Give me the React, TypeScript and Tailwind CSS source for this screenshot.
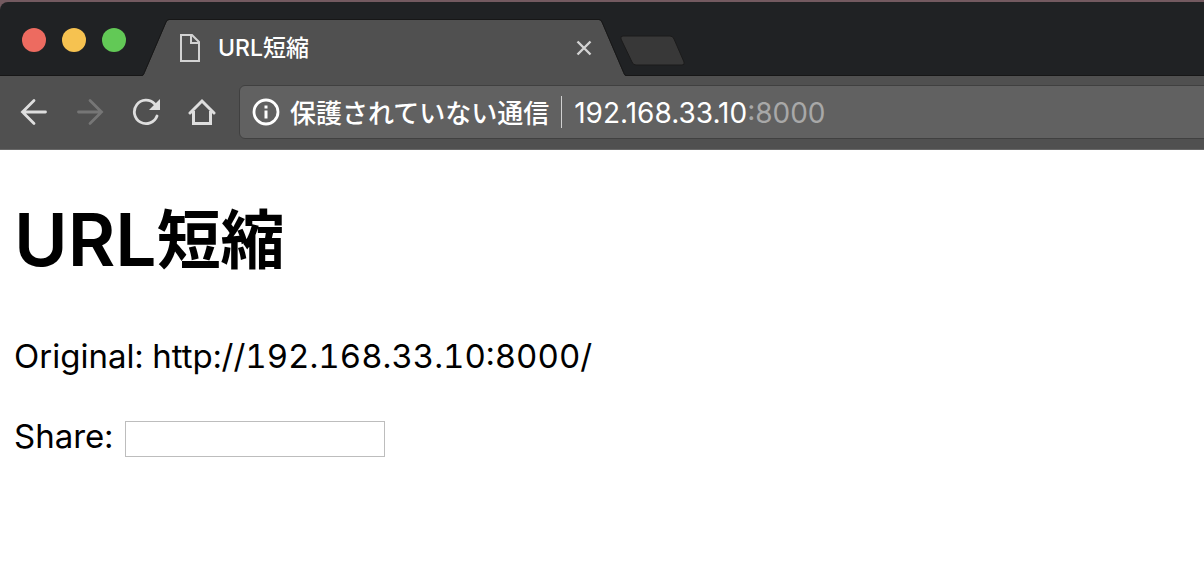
import React from "react";

function WindowControls() {
  return (
    <div className="flex gap-4 pt-[26px] pl-[22px]">
      <button type="button" aria-label="Close window" className="size-6 rounded-full bg-[#ed6b60]" />
      <button type="button" aria-label="Minimize window" className="size-6 rounded-full bg-[#f6c250]" />
      <button type="button" aria-label="Zoom window" className="size-6 rounded-full bg-[#62c956]" />
    </div>
  );
}

function TabStrip() {
  return (
    <div className="flex h-[74px] items-start rounded-tl-lg border-b border-[#171717] bg-[#202224]">
      <WindowControls />
      <div className="ml-4 flex w-[484px] shrink-0 self-end">
        <svg viewBox="0 0 27 57" className="-mb-px h-[57px] w-[27px] shrink-0" aria-hidden="true">
          <path d="M0 57 C2 56 2 55 3 53 L24 4 Q25 1 27 1 V57Z" fill="#505050" />
          <path d="M0 56.5 C2 56 2 54 3 52 L24 3 Q25 .5 27 .5" fill="none" stroke="#171717" />
        </svg>
        <div className="-mb-px flex h-[57px] min-w-0 flex-1 items-center border-t border-[#171717] bg-[#505050] pl-[10px]">
          <svg viewBox="0 0 22 30" className="h-[30px] w-[22px] shrink-0" fill="none" stroke="#d2d2d2" strokeWidth="2" aria-hidden="true">
            <path d="M2 2H13L20 9V28H2Z" />
            <path d="M12 2V10H20" />
          </svg>
          <span className="ml-[17px] flex-1 truncate font-['Inter','Noto_Sans_CJK_JP',sans-serif] text-[23px] leading-8 font-medium text-white">
            URL短縮
          </span>
          <button type="button" aria-label="Close tab" className="mr-[7px] flex size-4 items-center justify-center">
            <svg viewBox="0 0 16 16" className="size-4" stroke="#d2d2d2" strokeWidth="2.4">
              <path d="M1.5 1.5L14.5 14.5M14.5 1.5L1.5 14.5" />
            </svg>
          </button>
        </div>
        <svg viewBox="0 0 27 57" className="-mb-px h-[57px] w-[27px] shrink-0" aria-hidden="true">
          <path d="M27 57 C25 56 25 55 24 53 L3 4 Q2 1 0 1 V57Z" fill="#505050" />
          <path d="M27 56.5 C25 56 25 54 24 52 L3 3 Q2 .5 0 .5" fill="none" stroke="#171717" />
        </svg>
      </div>
      <button type="button" aria-label="New tab" className="-ml-[6px] mt-[33px]">
        <svg viewBox="0 0 66 32" className="h-8 w-[66px]">
          <path d="M3 1H50Q53 1 54 4L64 27Q65 30 62 30H16Q13 30 12 27L1 4Q0 1 3 1Z" fill="#383838" stroke="#1b1b1b" />
        </svg>
      </button>
    </div>
  );
}

function Toolbar() {
  return (
    <div className="flex h-[74px] items-start border-b border-[#686868] bg-[#505050] pt-[9px]">
      <div className="flex shrink-0 gap-7 pt-[13px] pr-[23px] pl-5">
        <button type="button" aria-label="Back">
          <svg viewBox="0 0 28 28" className="size-7" fill="none" stroke="#dedede" strokeWidth="2.8" strokeLinecap="round">
            <path d="M25.5 14H2.5M14 2.5L2.5 14L14 25.5" />
          </svg>
        </button>
        <button type="button" aria-label="Forward" disabled>
          <svg viewBox="0 0 28 28" className="size-7" fill="none" stroke="#767676" strokeWidth="2.8" strokeLinecap="round">
            <path d="M2.5 14H25.5M14 2.5L25.5 14L14 25.5" />
          </svg>
        </button>
        <button type="button" aria-label="Reload">
          <svg viewBox="0 0 28 28" className="size-7" fill="none">
            <path d="M22.5 5.8A11.7 11.7 0 1 0 25 18" stroke="#dedede" strokeWidth="2.8" strokeLinecap="round" />
            <path d="M28 1V12H17Z" fill="#dedede" />
          </svg>
        </button>
        <button type="button" aria-label="Home">
          <svg viewBox="0 0 28 28" className="size-7" fill="none" stroke="#dedede" strokeWidth="3">
            <path d="M2 15L14 3L26 15" strokeLinecap="round" />
            <path d="M5.5 13V25.5H22.5V13" />
          </svg>
        </button>
      </div>
      <div className="-mr-2 flex h-[54px] min-w-0 flex-1 items-center rounded-md border border-[#404040] bg-[#616161] pl-3 whitespace-nowrap">
        <svg viewBox="0 0 28 28" className="size-7 shrink-0" aria-hidden="true">
          <circle cx="14" cy="14" r="12" fill="none" stroke="#fff" strokeWidth="2.8" />
          <path d="M12.5 7.5h3v3h-3zM12.5 12.5h3v8h-3z" fill="#fff" />
        </svg>
        <span className="ml-[10px] font-['Noto_Sans_CJK_JP',sans-serif] text-[26px] leading-9 font-medium text-white">
          保護されていない通信
        </span>
        <span className="ml-3 h-8 w-px bg-[#d0d0d0]" />
        <span className="ml-3 pt-[2px] font-['Inter',sans-serif] text-[28px] leading-9 text-white">
          192.168.33.10<span className="text-[#a8a8a8]">:8000</span>
        </span>
      </div>
    </div>
  );
}

export default function App() {
  return (
    <div className="min-h-screen bg-white text-black">
      <header className="overflow-hidden bg-[#735a60] pt-[2px]">
        <TabStrip />
        <Toolbar />
      </header>
      <main className="px-[14px] pt-[42px] font-['Inter','Noto_Sans_CJK_JP',sans-serif] text-[33px] leading-[48px] tabular-nums">
        <h1 className="flex items-center text-[64px] leading-[96px] font-bold">
          <span className="text-[73px] font-semibold">URL</span>
          <span>短縮</span>
        </h1>
        <p className="mt-11">Original: http://192.168.33.10:8000/</p>
        <div className="mt-8 flex items-end">
          <label htmlFor="share">Share:</label>
          <input id="share" type="text" className="mb-[3px] ml-3 h-9 w-[260px] border border-[#bdbdbd] bg-white px-1 text-[26px] outline-none" />
        </div>
      </main>
    </div>
  );
}
